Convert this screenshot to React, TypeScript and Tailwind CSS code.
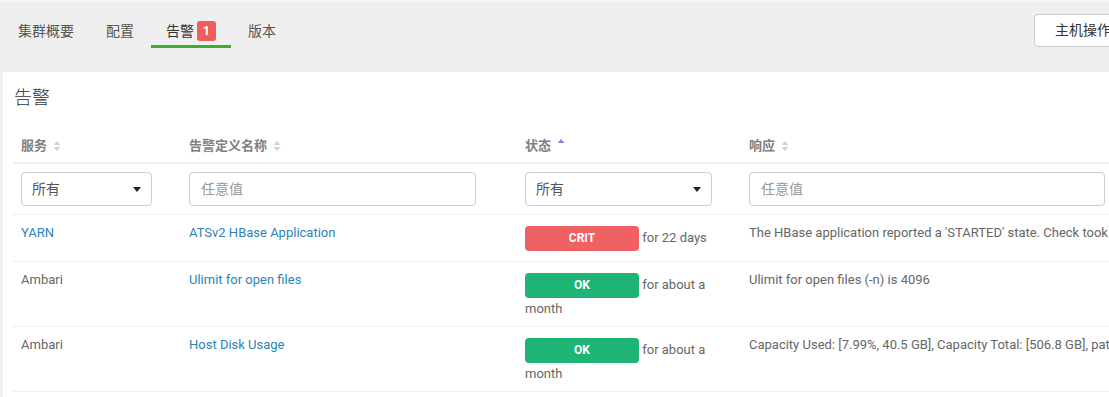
import React from "react";

const font = "font-['Roboto','Noto_Sans_CJK_SC',sans-serif]";

function SortIcon({ dir }: { dir?: "asc" }) {
  if (dir === "asc") {
    return (
      <svg width="8" height="12" viewBox="0 0 8 12" className="inline-block ml-[6px] -mt-[4px] align-middle">
        <path d="M0.5 5 L4 1 L7.5 5 Z" fill="#8585e0" />
      </svg>
    );
  }
  return (
    <svg width="8" height="12" viewBox="0 0 8 12" className="inline-block ml-[6px] align-middle">
      <path d="M0.5 5 L4 1 L7.5 5 Z" fill="#d2d2d2" />
      <path d="M0.5 7 L4 11 L7.5 7 Z" fill="#d2d2d2" />
    </svg>
  );
}

function Caret() {
  return (
    <svg width="8" height="5" viewBox="0 0 8 5">
      <path d="M0 0 L8 0 L4 5 Z" fill="#222" />
    </svg>
  );
}

function FakeSelect({ width }: { width: string }) {
  return (
    <div
      className={`${width} h-[34px] flex items-center justify-between pl-[10px] pr-[10px] border border-[#ccc] rounded-[4px] bg-white text-[14px] text-[#555]`}
    >
      <span>所有</span>
      <Caret />
    </div>
  );
}

function FakeInput({ width }: { width: string }) {
  return (
    <input
      readOnly
      placeholder="任意值"
      className={`block ${width} h-[34px] px-[11px] border border-[#ccc] rounded-[4px] bg-white text-[14px] placeholder:text-[#999] outline-none ${font}`}
    />
  );
}

const rows = [
  {
    service: "YARN",
    serviceLink: true,
    name: "ATSv2 HBase Application",
    state: "CRIT",
    since: "for 22 days",
    text: "The HBase application reported a 'STARTED' state. Check took 2.456s",
  },
  {
    service: "Ambari",
    serviceLink: false,
    name: "Ulimit for open files",
    state: "OK",
    since: "for about a month",
    text: "Ulimit for open files (-n) is 4096",
  },
  {
    service: "Ambari",
    serviceLink: false,
    name: "Host Disk Usage",
    state: "OK",
    since: "for about a month",
    text: "Capacity Used: [7.99%, 40.5 GB], Capacity Total: [506.8 GB], path=/usr/hdp",
  },
];

export default function App() {
  const tabs = ["集群概要", "配置", "告警", "版本"];

  return (
    <div className={`w-[1109px] h-[397px] overflow-hidden bg-[#efefef] ${font}`}>
      <div className="w-[1200px]">
        {/* Top nav */}
        <div className="h-[72px] flex items-start border-t-2 border-[#f5f5f5]">
          <div className="flex gap-[2px] pl-[3px] pt-[19px]">
            {tabs.map((t) => {
              const active = t === "告警";
              return (
                <div
                  key={t}
                  className={`flex items-center px-[15px] pb-[4px] border-b-[3px] ${
                    active ? "border-[#3fae2a] text-[#333]" : "border-transparent text-[#555]"
                  }`}
                >
                  <span className="text-[14px] leading-[20px]">{t}</span>
                  {active && (
                    <span className="ml-[3px] w-[19px] h-[20px] rounded-[3px] bg-[#ee5e5e] text-white text-[12px] font-bold flex items-center justify-center">
                      1
                    </span>
                  )}
                </div>
              );
            })}
          </div>
          <button className="ml-[743px] mt-[12px] h-[33px] px-[20px] bg-white border border-[#ccc] rounded-[4px] text-[14px] text-[#333]">
            主机操作
          </button>
        </div>

        {/* Panel */}
        <div className="ml-[3px] bg-white h-[340px] pl-[10px] pt-[13px]">
          <h2 className="pl-[1px] text-[18px] leading-[26px] font-light text-[#333]">告警</h2>

          <table className="mt-[18px] table-fixed border-collapse w-[1190px]">
            <colgroup>
              <col className="w-[168px]" />
              <col className="w-[336px]" />
              <col className="w-[224px]" />
              <col />
            </colgroup>
            <thead>
              <tr className="h-[34px] border-b-2 border-[#eee] text-left text-[13px] font-bold text-[#808080]">
                <th className="px-[8px] align-middle font-bold">
                  服务
                  <SortIcon />
                </th>
                <th className="px-[8px] align-middle font-bold">
                  告警定义名称
                  <SortIcon />
                </th>
                <th className="px-[8px] align-middle font-bold">
                  状态
                  <SortIcon dir="asc" />
                </th>
                <th className="px-[8px] align-middle font-bold">
                  响应
                  <SortIcon />
                </th>
              </tr>
              <tr className="border-b border-[#eee] text-left">
                <th className="px-[8px] py-[8px] font-normal">
                  <FakeSelect width="w-[131px]" />
                </th>
                <th className="px-[8px] py-[8px] font-normal">
                  <FakeInput width="w-[287px]" />
                </th>
                <th className="px-[8px] py-[8px] font-normal">
                  <FakeSelect width="w-[187px]" />
                </th>
                <th className="px-[8px] py-[8px] font-normal">
                  <FakeInput width="w-[356px]" />
                </th>
              </tr>
            </thead>
            <tbody>
              {rows.map((r, i) => (
                <tr key={i} className="border-b border-[#eee] text-[13px] leading-[20px] text-[#666] align-top">
                  <td className="px-[8px] py-[8px]">
                    <span className={r.serviceLink ? "text-[#2b84b8]" : ""}>{r.service}</span>
                  </td>
                  <td className="px-[8px] py-[8px]">
                    <span className="text-[#2b84b8]">{r.name}</span>
                  </td>
                  <td className="px-[8px] py-[8px] leading-[18px]">
                    <span
                      className={`inline-block w-[114px] h-[25px] mt-[3px] mb-[2px] rounded-[4px] text-center text-white text-[12px] font-bold leading-[25px] ${
                        r.state === "CRIT" ? "bg-[#ef6162]" : "bg-[#1eb475]"
                      }`}
                    >
                      {r.state}
                    </span>{" "}
                    {r.since}
                  </td>
                  <td className="px-[8px] py-[8px] whitespace-nowrap">{r.text}</td>
                </tr>
              ))}
            </tbody>
          </table>
        </div>
      </div>
    </div>
  );
}
